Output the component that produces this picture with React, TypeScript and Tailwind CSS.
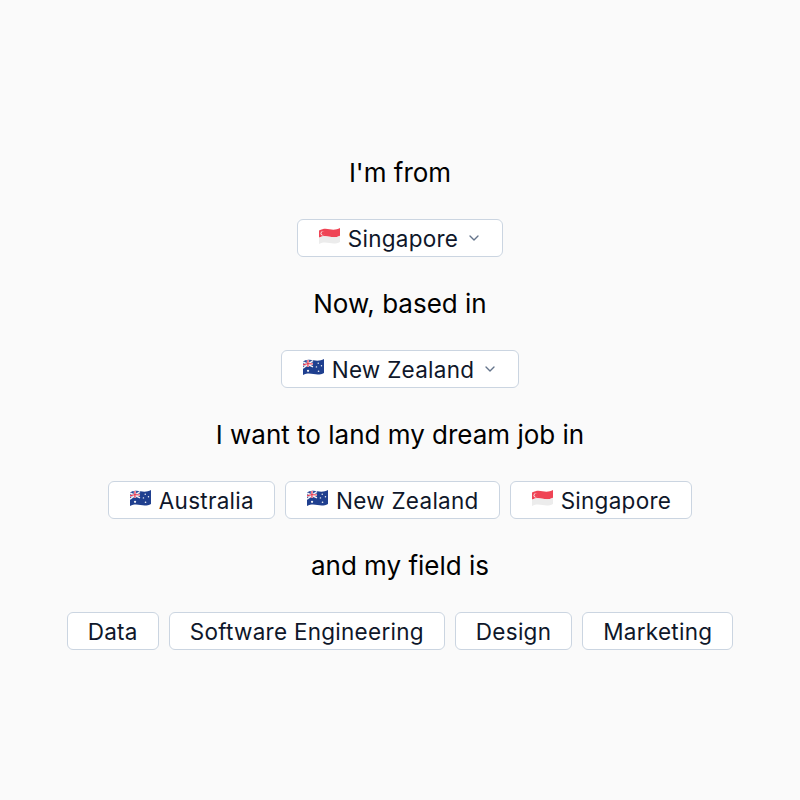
import { ChevronDown } from "lucide-react";

const SingaporeFlag = () => (
  <svg width="21" height="16" viewBox="1 1 20 15.4" preserveAspectRatio="none" className="ml-px mr-2 -mt-1 shrink-0">
    <path d="M1 3.4 C5 1.2 8 1.5 11 2.2 C15 3 18 2.6 21 1 V8.4 C18 9.9 15 10.2 11 9.5 C8 9 5 8.4 1 10.4 Z" fill="#ef4455" />
    <path d="M1 10.4 C5 8.4 8 9 11 9.5 C15 10.2 18 9.9 21 8.4 V14.4 C18 16 15 16.2 11 15.5 C8 15 5 14.4 1 16.4 Z" fill="#ececec" />
    <circle cx="4.4" cy="6.2" r="2" fill="#fbe3e5" />
    <circle cx="5.2" cy="6" r="1.8" fill="#ef4455" />
  </svg>
);

const AnzacFlag = () => (
  <svg width="21" height="16" viewBox="1 1 20 15.4" preserveAspectRatio="none" className="ml-px mr-2 -mt-1 shrink-0">
    <path d="M1 3.4 C5 1.2 8 1.5 11 2.2 C15 3 18 2.6 21 1 V14.4 C18 16 15 16.2 11 15.5 C8 15 5 14.4 1 16.4 Z" fill="#1f3f8f" />
    <path d="M1 3.4 C4 1.8 7 1.6 10.5 2.1 V9 C7 8.4 4 8.6 1 10.2 Z" fill="#2b4a9b" />
    <path d="M1 3.8 L10.5 8.6 M10.5 2.4 L1 9.8" stroke="#f4f4f6" strokeWidth="1.4" />
    <path d="M5.7 2 V8.8 M1 6.7 C4 5.5 7 5.4 10.5 5.8" stroke="#f4f4f6" strokeWidth="2.2" fill="none" />
    <path d="M5.7 2 V8.8 M1 6.7 C4 5.5 7 5.4 10.5 5.8" stroke="#e5344c" strokeWidth="1.1" fill="none" />
    <circle cx="5.8" cy="12.4" r="1.1" fill="#f4f4f6" />
    <circle cx="15.5" cy="5" r="0.7" fill="#f4f4f6" />
    <circle cx="18.6" cy="7.4" r="0.7" fill="#f4f4f6" />
    <circle cx="13.8" cy="8.6" r="0.7" fill="#f4f4f6" />
    <circle cx="15.8" cy="12.8" r="0.8" fill="#f4f4f6" />
  </svg>
);

const Heading = ({ children }: { children: string }) => (
  <h2 className="h-8 mb-[30px] text-[26px] leading-8 font-normal text-black">{children}</h2>
);

const Chip = ({ flag, label, select }: { flag?: "sg" | "anz"; label: string; select?: boolean }) => (
  <button className="flex h-[38px] items-center rounded-md border border-[#cbd5e1] bg-white px-5 text-[22.5px] leading-none tracking-[0.012em] text-[#0f172a]">
    {flag === "sg" && <SingaporeFlag />}
    {flag === "anz" && <AnzacFlag />}
    <span className="mt-0.5">{label}</span>
    {select && <ChevronDown className="ml-2 h-4 w-4 text-[#64748b]" />}
  </button>
);

export default function App() {
  return (
    <div
      className="min-h-screen bg-[#fafafa] pt-[157px] flex flex-col items-center"
      style={{ fontFamily: "Inter, sans-serif" }}
    >
      <Heading>I'm from</Heading>
      <div className="mb-[31px]">
        <Chip flag="sg" label="Singapore" select />
      </div>
      <Heading>Now, based in</Heading>
      <div className="mb-[31px]">
        <Chip flag="anz" label="New Zealand" select />
      </div>
      <Heading>I want to land my dream job in</Heading>
      <div className="mb-[31px] flex gap-[10px]">
        <Chip flag="anz" label="Australia" />
        <Chip flag="anz" label="New Zealand" />
        <Chip flag="sg" label="Singapore" />
      </div>
      <Heading>and my field is</Heading>
      <div className="flex gap-[10px]">
        <Chip label="Data" />
        <Chip label="Software Engineering" />
        <Chip label="Design" />
        <Chip label="Marketing" />
      </div>
    </div>
  );
}
